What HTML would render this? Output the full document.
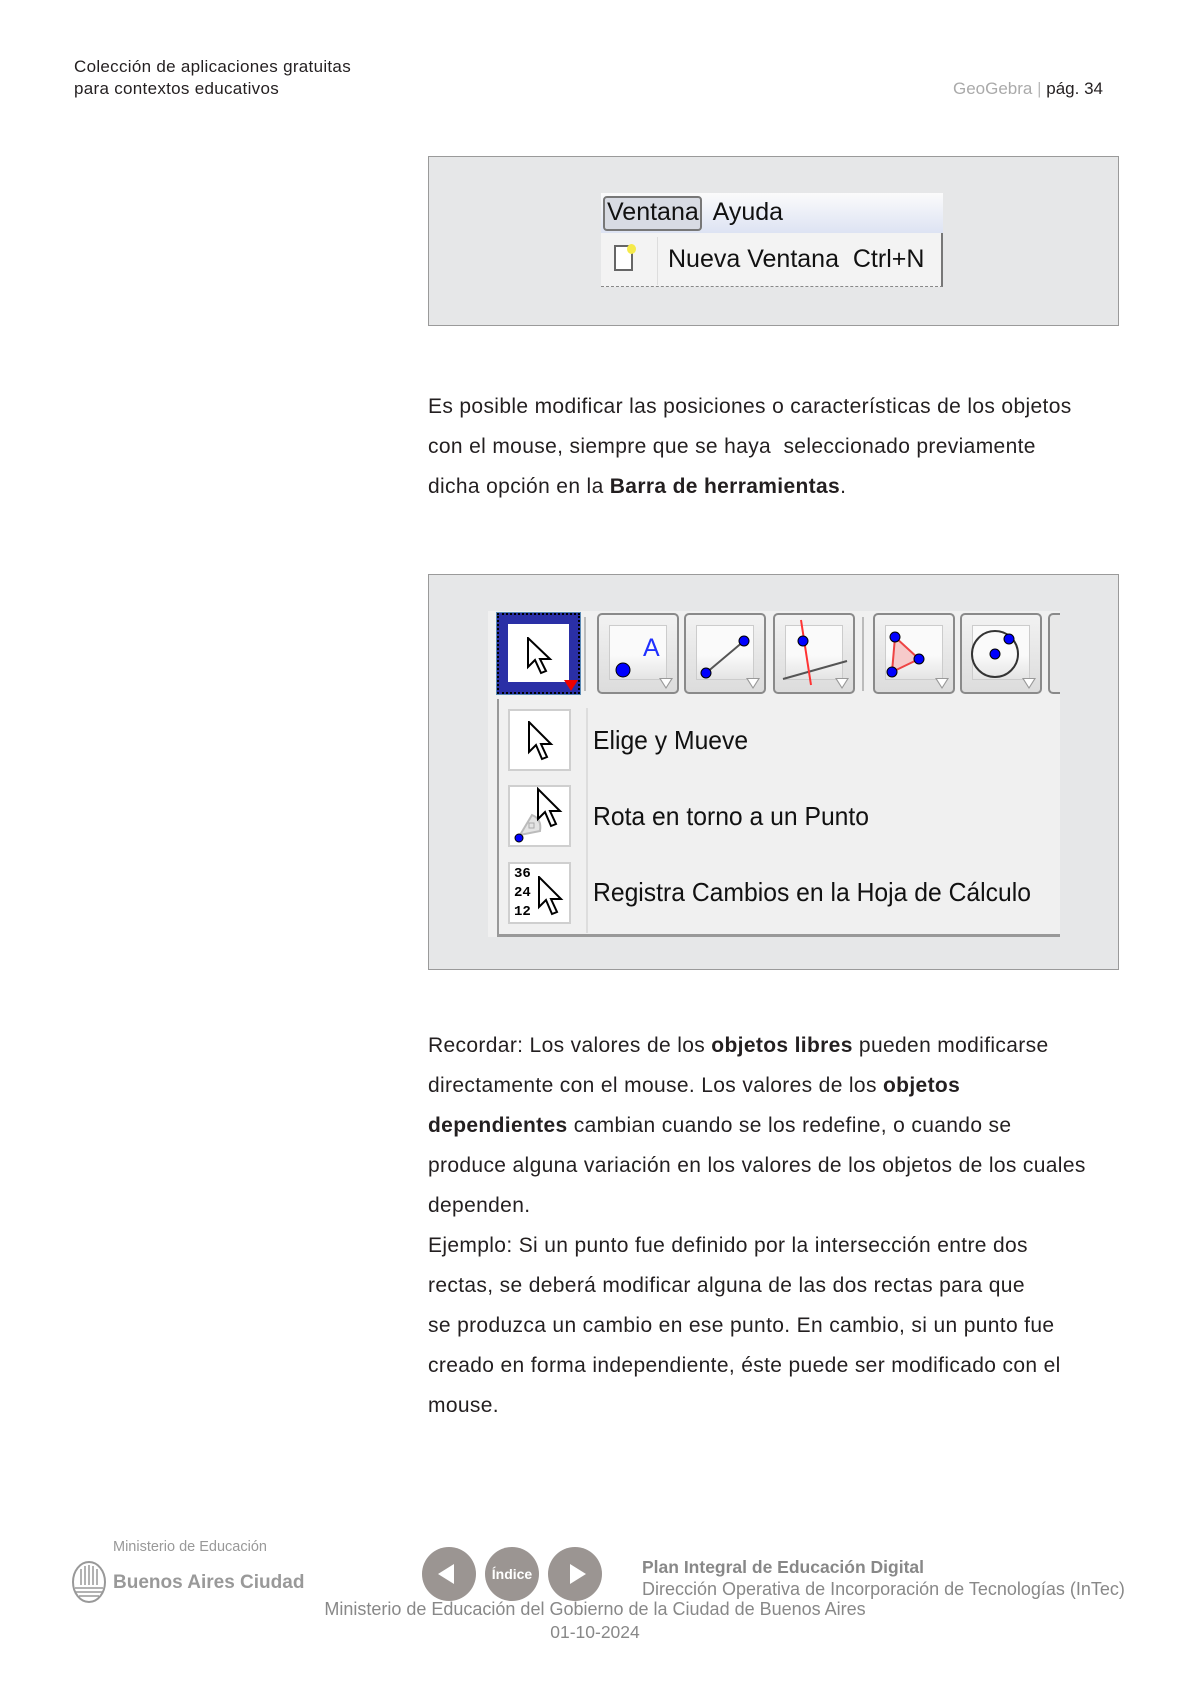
<!DOCTYPE html>
<html><head><meta charset="utf-8"><style>
*{margin:0;padding:0;box-sizing:border-box}
body{width:1190px;height:1683px;background:#fff;position:relative;font-family:"Liberation Sans",Arial,sans-serif;color:#231f20;overflow:hidden}
.a{position:absolute;white-space:nowrap}
.p{font-size:21px;line-height:40px;letter-spacing:.35px}
.btn{position:absolute;top:613px;width:82px;height:81px;border:2px solid #8a8a8a;border-radius:5px;background:linear-gradient(#f2f2f2,#dcdcdc)}
.btn .in{position:absolute;left:10px;top:10px;right:10px;bottom:12px;background:linear-gradient(#fafafa 55%,#e4e4e4);border:1px solid #ccc}
.tri{position:absolute;right:4px;bottom:3px;width:0;height:0;border-left:7px solid transparent;border-right:7px solid transparent;border-top:11px solid #999}
.tri:after{content:"";position:absolute;left:-5px;top:-10px;border-left:5px solid transparent;border-right:5px solid transparent;border-top:8px solid #fff}
.ic{position:absolute;left:508px;width:63px;height:62px;background:#fff;border:2px solid #cfcfcf}
.it{position:absolute;left:593px;font-size:26px;color:#111;transform:scaleX(.95);transform-origin:left}
.circ{position:absolute;top:1547px;width:54px;height:54px;border-radius:50%;background:#9b9592;color:#fff}
</style></head><body>
<div class="a" style="left:74px;top:56px;font-size:17px;line-height:22px;letter-spacing:.3px;color:#231f20">Colección de aplicaciones gratuitas<br>para contextos educativos</div>
<div class="a" style="right:87px;top:78px;font-size:17px;line-height:22px"><span style="color:#aaa">GeoGebra</span> <span style="color:#bbb">|</span> pág. 34</div>

<div class="a" style="left:428px;top:156px;width:691px;height:170px;background:#e6e7e8;border:1.5px solid #9a9a9a"></div>
<div class="a" style="left:601px;top:193px;width:342px;height:40px;background:linear-gradient(#fbfbfb,#dde3f3)"></div>
<div class="a" style="left:603px;top:196px;width:99px;height:35px;border:2px solid #777;border-radius:4px;background:#d8dbe3"></div>
<div class="a" style="left:607px;top:198px;font-size:25px;font-family:'Liberation Sans Narrow','Liberation Sans',sans-serif;color:#111">Ventana&nbsp;&nbsp;Ayuda</div>
<div class="a" style="left:601px;top:233px;width:342px;height:54px;background:#f3f3f3;border-right:2px solid #777;border-bottom:1px dashed #888"></div>
<div class="a" style="left:657px;top:237px;width:1px;height:48px;background:#ddd"></div>
<div class="a" style="left:614px;top:245px;width:19px;height:26px;border:2px solid #666;background:#fff"></div>
<div class="a" style="left:627px;top:244px;width:9px;height:10px;border-radius:50%;background:#f5ea4a"></div>
<div class="a" style="left:668px;top:245px;font-size:25px;font-family:'Liberation Sans Narrow','Liberation Sans',sans-serif;color:#111">Nueva Ventana&nbsp;&nbsp;Ctrl+N</div>

<div class="a p" style="left:428px;top:387px">Es posible modificar las posiciones o características de los objetos<br>con el mouse, siempre que se haya &nbsp;seleccionado previamente<br>dicha opción en la <b>Barra de herramientas</b>.</div>

<div class="a" style="left:428px;top:574px;width:691px;height:396px;background:#e6e7e8;border:1.5px solid #9a9a9a"></div>
<div class="a" style="left:488px;top:611px;width:572px;height:326px;background:#f0f0f0"></div>
<div class="a" style="left:497px;top:699px;width:563px;height:238px;border-left:2px solid #999;border-bottom:3px solid #999;background:#f0f0f0"></div>
<div class="a" style="left:584px;top:617px;width:2px;height:74px;background:#bbb"></div>
<div class="a" style="left:862px;top:617px;width:2px;height:74px;background:#bbb"></div>
<div class="a" style="left:586px;top:708px;width:2px;height:225px;background:#ddd"></div>

<div class="a" style="left:497px;top:613px;width:83px;height:81px;background:#2a2fa6;border:2px dotted #000;outline:1px solid #5a8ab5">
<div style="position:absolute;left:9px;top:9px;right:9px;bottom:10px;background:#fff"></div>
<svg style="position:absolute;left:28px;top:22px" width="30" height="40" viewBox="0 0 30 40"><path d="M1 1 L1 30 L8 23 L14 36 L19 34 L13 22 L23 22 Z" fill="#fff" stroke="#000" stroke-width="2"/></svg>
<div style="position:absolute;right:0;bottom:1px;border-left:7px solid transparent;border-right:7px solid transparent;border-top:11px solid #e00"></div>
</div>

<div class="btn" style="left:597px"><div class="in"></div><svg style="position:absolute;left:0;top:0" width="82" height="81"><circle cx="24" cy="55" r="7" fill="#00f" stroke="#000"/><text x="44" y="41" font-size="25" fill="#2030ff" font-family="Liberation Sans">A</text></svg><div class="tri"></div></div>
<div class="btn" style="left:684px"><div class="in"></div><svg style="position:absolute;left:0;top:0" width="82" height="81"><line x1="20" y1="58" x2="58" y2="26" stroke="#555" stroke-width="2"/><circle cx="20" cy="58" r="5" fill="#00f" stroke="#000"/><circle cx="58" cy="26" r="5" fill="#00f" stroke="#000"/></svg><div class="tri"></div></div>
<div class="btn" style="left:773px"><div class="in"></div><svg style="position:absolute;left:0;top:0" width="82" height="81"><line x1="8" y1="64" x2="72" y2="46" stroke="#555" stroke-width="2"/><line x1="26" y1="5" x2="36" y2="70" stroke="#f33" stroke-width="2"/><circle cx="28" cy="26" r="5" fill="#00f" stroke="#000"/></svg><div class="tri"></div></div>
<div class="btn" style="left:873px"><div class="in"></div><svg style="position:absolute;left:0;top:0" width="82" height="81"><polygon points="20,22 44,44 17,57" fill="#f6caca" stroke="#e44" stroke-width="2"/><circle cx="20" cy="22" r="5" fill="#00f" stroke="#000"/><circle cx="44" cy="44" r="5" fill="#00f" stroke="#000"/><circle cx="17" cy="57" r="5" fill="#00f" stroke="#000"/></svg><div class="tri"></div></div>
<div class="btn" style="left:960px"><div class="in"></div><svg style="position:absolute;left:0;top:0" width="82" height="81"><circle cx="33" cy="39" r="23" fill="none" stroke="#333" stroke-width="2"/><circle cx="33" cy="39" r="5" fill="#00f" stroke="#000"/><circle cx="47" cy="24" r="5" fill="#00f" stroke="#000"/></svg><div class="tri"></div></div>
<div class="a" style="left:1048px;top:613px;width:12px;height:81px;border:2px solid #8a8a8a;border-right:none;border-radius:5px 0 0 5px;background:#e8e8e8"></div>

<div class="ic" style="top:709px"><svg style="position:absolute;left:18px;top:10px" width="30" height="42" viewBox="0 0 30 42"><path d="M1 1 L1 31 L8 24 L14 38 L19 36 L13 23 L23 23 Z" fill="#fff" stroke="#000" stroke-width="2"/></svg></div>
<div class="ic" style="top:785px"><svg style="position:absolute;left:0;top:0" width="60" height="58"><path d="M10 48 L22 28 Q32 32 30 44 Z" fill="#e4e4e4" stroke="#bbb" stroke-width="2"/><rect x="19" y="36" width="5" height="5" fill="none" stroke="#aaa"/><circle cx="9" cy="51" r="4" fill="#00f" stroke="#000"/><path d="M28 2 L28 32 L35 25 L41 39 L46 37 L40 24 L50 24 Z" fill="#fff" stroke="#000" stroke-width="2"/></svg></div>
<div class="ic" style="top:862px"><div style="position:absolute;left:4px;top:1px;font-size:14px;line-height:19px;font-weight:bold;font-family:'Liberation Mono',monospace;color:#000">36<br>24<br>12</div><svg style="position:absolute;left:28px;top:12px" width="30" height="42" viewBox="0 0 30 42"><path d="M1 1 L1 31 L8 24 L14 38 L19 36 L13 23 L23 23 Z" fill="#fff" stroke="#000" stroke-width="2"/></svg></div>

<div class="it a" style="top:725px">Elige y Mueve</div>
<div class="it a" style="top:801px">Rota en torno a un Punto</div>
<div class="it a" style="top:877px">Registra Cambios en la Hoja de Cálculo</div>

<div class="a p" style="left:428px;top:1026px">Recordar: Los valores de los <b>objetos libres</b> pueden modificarse<br>directamente con el mouse. Los valores de los <b>objetos</b><br><b>dependientes</b> cambian cuando se los redefine, o cuando se<br>produce alguna variación en los valores de los objetos de los cuales<br>dependen.<br>Ejemplo: Si un punto fue definido por la intersección entre dos<br>rectas, se deberá modificar alguna de las dos rectas para que<br>se produzca un cambio en ese punto. En cambio, si un punto fue<br>creado en forma independiente, éste puede ser modificado con el<br>mouse.</div>

<div class="a" style="left:113px;top:1539px;font-size:14.5px;color:#999">Ministerio de Educación</div>
<svg class="a" style="left:71px;top:1561px" width="36" height="42"><ellipse cx="18" cy="21" rx="16" ry="20" fill="none" stroke="#999" stroke-width="2"/><g stroke="#999" stroke-width="1.5"><line x1="10" y1="8" x2="10" y2="24"/><line x1="14" y1="5" x2="14" y2="24"/><line x1="18" y1="4" x2="18" y2="24"/><line x1="22" y1="5" x2="22" y2="24"/><line x1="26" y1="8" x2="26" y2="24"/><line x1="4" y1="27" x2="32" y2="27"/><line x1="5" y1="31" x2="31" y2="31"/><line x1="8" y1="35" x2="28" y2="35"/></g></svg>
<div class="a" style="left:113px;top:1572px;font-size:19px;font-weight:bold;color:#999">Buenos Aires Ciudad</div>

<div class="circ" style="left:422px"><div style="position:absolute;left:16px;top:17px;border-top:10px solid transparent;border-bottom:10px solid transparent;border-right:16px solid #fff"></div></div>
<div class="circ" style="left:485px"><div style="position:absolute;width:54px;top:19px;text-align:center;font-size:14px;font-weight:bold">Índice</div></div>
<div class="circ" style="left:548px"><div style="position:absolute;left:22px;top:17px;border-top:10px solid transparent;border-bottom:10px solid transparent;border-left:16px solid #fff"></div></div>

<div class="a" style="left:642px;top:1557px;font-size:17.5px;font-weight:bold;color:#888">Plan Integral de Educación Digital</div>
<div class="a" style="left:642px;top:1579px;font-size:18px;color:#888">Dirección Operativa de Incorporación de Tecnologías (InTec)</div>
<div class="a" style="left:0;width:1190px;text-align:center;top:1599px;font-size:18px;color:#888">Ministerio de Educación del Gobierno de la Ciudad de Buenos Aires</div>
<div class="a" style="left:0;width:1190px;text-align:center;top:1622px;font-size:17.5px;color:#888">01-10-2024</div>
</body></html>
